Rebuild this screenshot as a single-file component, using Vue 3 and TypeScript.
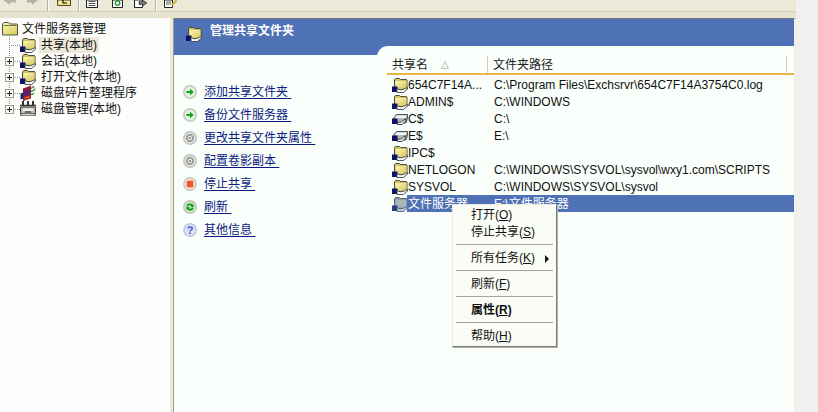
<script setup lang="ts">
interface TreeRow { label: string; icon: string; plus: boolean; selected?: boolean; last?: boolean }
interface TaskRow { label: string; icon: string }
interface ShareRow { name: string; path: string; icon: string; selected?: boolean }

const treeRows: TreeRow[] = [
  { label: '共享(本地)', icon: '#i-share', plus: false, selected: true },
  { label: '会话(本地)', icon: '#i-share', plus: true },
  { label: '打开文件(本地)', icon: '#i-share', plus: true },
  { label: '磁盘碎片整理程序', icon: '#i-defrag', plus: true },
  { label: '磁盘管理(本地)', icon: '#i-diskmgmt', plus: true, last: true },
]
const tasks: TaskRow[] = [
  { label: '添加共享文件夹', icon: '#t-go' },
  { label: '备份文件服务器', icon: '#t-go' },
  { label: '更改共享文件夹属性', icon: '#t-gear' },
  { label: '配置卷影副本', icon: '#t-gear' },
  { label: '停止共享', icon: '#t-stop' },
  { label: '刷新', icon: '#t-refresh' },
  { label: '其他信息', icon: '#t-help' },
]
const shares: ShareRow[] = [
  { name: '654C7F14A...', path: 'C:\\Program Files\\Exchsrvr\\654C7F14A3754C0.log', icon: '#i-share' },
  { name: 'ADMIN$', path: 'C:\\WINDOWS', icon: '#i-share' },
  { name: 'C$', path: 'C:\\', icon: '#i-drive' },
  { name: 'E$', path: 'E:\\', icon: '#i-drive' },
  { name: 'IPC$', path: '', icon: '#i-share' },
  { name: 'NETLOGON', path: 'C:\\WINDOWS\\SYSVOL\\sysvol\\wxy1.com\\SCRIPTS', icon: '#i-share' },
  { name: 'SYSVOL', path: 'C:\\WINDOWS\\SYSVOL\\sysvol', icon: '#i-share' },
  { name: '文件服务器', path: 'E:\\文件服务器', icon: '#i-share-sel', selected: true },
]
</script>

<template>
  <div class="page">
    <svg class="defs" width="0" height="0" aria-hidden="true">
      <defs>
        <linearGradient id="g-folder" x1="0" y1="0" x2="1" y2="1">
          <stop offset="0" stop-color="#fbf6b8" />
          <stop offset="1" stop-color="#d8c85c" />
        </linearGradient>
        <symbol id="i-folder" viewBox="0 0 16 16">
          <path d="M.5 3 2 1.500h4.500l1.500 1.500h7l.5.500v10.500H.500z" fill="url(#g-folder)" stroke="#55533a" />
          <path d="M1.500 4.500h13" stroke="#77754f" />
        </symbol>
        <symbol id="i-share" viewBox="0 0 16 16">
          <path d="M2.500 2.500 3.500 1.500h4l1 1h6l.5.500v9.500h-12.500z" fill="#cfc36a" stroke="#4f4e38" />
          <path d="M3.500 4h11v7.500h-11z" fill="url(#g-folder)" />
          <path d="M0 9.500h5.500V15H0z" fill="#0a1468" />
          <path d="M5 11.500c2 1.500 5 1.500 7 .5l3.500-1.500v1.500l-4 3.500H5z" fill="#f6f8f8" stroke="#3e4448" stroke-width=".9" />
        </symbol>
        <symbol id="i-share-sel" viewBox="0 0 16 16">
          <path d="M2.500 2.500 3.500 1.500h4l1 1h6l.5.500v9.500h-12.500z" fill="#8f9ba0" stroke="#5c6a74" />
          <path d="M3.500 4h11v7.500h-11z" fill="#a9b6b8" />
          <path d="M0 9.500h5.500V15H0z" fill="#263a82" />
          <path d="M5 11.500c2 1.500 5 1.500 7 .5l3.500-1.500v1.500l-4 3.500H5z" fill="#c2ccd6" stroke="#506078" stroke-width=".9" />
        </symbol>
        <symbol id="i-drive" viewBox="0 0 16 16">
          <path d="M2 6.500 4.500 3.500H15.500V7.500L14 12H2z" fill="#b4b8be" stroke="#3e4248" stroke-width=".9" />
          <path d="M4.500 4.500h10L13.500 7H3z" fill="#f2f4f6" />
          <path d="M0 7.500h5.500V13H0z" fill="#0a1268" />
          <path d="M5.500 10.500c2 1.500 4 .5 5-.5l3.500-2.500-1 3-3 3H5.500z" fill="#f6f8f8" stroke="#2c3036" stroke-width=".9" />
        </symbol>
        <symbol id="i-defrag" viewBox="0 0 16 16">
          <path d="M3 3.500 11 .5v13l-8 2.500z" fill="#8f1c2c" />
          <path d="M5 6l4.500-1.500v5L5 11z" fill="#3f2a8c" />
          <path d="M4.500 12l5.500-1.500v2.500l-5.500 1.500z" fill="#d24a2e" />
          <path d="M11 3.500l3-2M11 6.500l4-2M11 9.500l3-1" stroke="#3fa04a" stroke-width="1.500" />
          <path d="M12 .5l3.500 3.500" stroke="#d050b0" />
          <path d="M.5 8.500l3-1v6l-3 1z" fill="#1a2a6e" />
        </symbol>
        <symbol id="i-diskmgmt" viewBox="0 0 16 16">
          <path d="M3 0v5M8 0v5M13 0v5" stroke="#1c1c1c" stroke-width="1.800" />
          <path d="M0 4.500h16" stroke="#333" stroke-width="1.500" />
          <path d="M.5 6h15v6.500H.500z" fill="#b9bcb4" stroke="#3a3a36" />
          <path d="M3 7.500h10v2.500H3z" fill="#f0f0e8" />
          <path d="M5 10h6v3H5z" fill="#686c70" />
          <path d="M0 12.500h16V15H0z" fill="#85877f" />
          <path d="M2 13.500h12" stroke="#d8d8d0" />
        </symbol>
        <symbol id="t-go" viewBox="0 0 16 16">
          <circle cx="8" cy="8" r="7" fill="#f2f6ee" stroke="#c6ccc2" stroke-width="2" />
          <circle cx="8" cy="8" r="5.500" fill="#dcf4d4" />
          <path d="M4 6.800h4V4.300L12.300 8 8 11.700V9.200H4z" fill="#12a024" />
        </symbol>
        <symbol id="t-gear" viewBox="0 0 16 16">
          <circle cx="8" cy="8" r="7" fill="#f0f0ec" stroke="#c6c6c0" stroke-width="2" />
          <circle cx="8" cy="8" r="4.800" fill="#9c9e9c" />
          <circle cx="8" cy="8" r="2.500" fill="#e8eae4" />
          <circle cx="8" cy="8" r="1.100" fill="#7a7c78" />
        </symbol>
        <symbol id="t-stop" viewBox="0 0 16 16">
          <circle cx="8" cy="8" r="7" fill="#f8f2ec" stroke="#d0c8be" stroke-width="2" />
          <circle cx="8" cy="8" r="5.500" fill="#fbdccc" />
          <rect x="4.300" y="4.300" width="7.400" height="7.400" rx="1" fill="#e85a32" />
        </symbol>
        <symbol id="t-refresh" viewBox="0 0 16 16">
          <circle cx="8" cy="8" r="7" fill="#ecf4e6" stroke="#bcc8b6" stroke-width="2" />
          <circle cx="8" cy="8" r="5.500" fill="#b8e6ac" />
          <path d="M4 7c.5-3 5-4 7-1.500L12 4.500V8H8.500L10 6.800C8.500 5.500 6 6 5.600 7.500z" fill="#0c9420" />
          <path d="M12 9c-.5 3-5 4-7 1.500L4 11.500V8h3.500L6 9.200c1.500 1.300 4 .8 4.400-.7z" fill="#0c9420" />
        </symbol>
        <symbol id="t-help" viewBox="0 0 16 16">
          <circle cx="8" cy="8" r="7" fill="#f0f1fa" stroke="#c4c8da" stroke-width="2" />
          <circle cx="8" cy="8" r="5.800" fill="#dbe1fa" />
          <path d="M5.600 6.200C5.800 3.900 10.600 3.900 10.600 6.300 10.600 8 8 8 8 9.800" fill="none" stroke="#4058d4" stroke-width="1.700" />
          <rect x="7.100" y="10.800" width="1.800" height="1.800" fill="#4058d4" />
        </symbol>
      </defs>
    </svg>

    <div class="window">
      <header class="toolbar">
        <div class="tool-row">
          <svg width="13" height="6" viewBox="0 0 13 6"><path d="M0 0h13v2.500H7V5L3.500 2.500z" fill="#b4b2a4" /></svg>
          <svg class="nav-fwd" width="11" height="6" viewBox="0 0 11 6"><path d="M11 0H0v2.500h5V5L8 2.500z" fill="#b4b2a4" /></svg>
          <span class="tool-sep first"></span>
          <svg class="t1" width="14" height="7" viewBox="0 0 14 7"><path d="M.5 0v5.500h13V0z" fill="#f3e58c" stroke="#4c4a30" /><path d="M6 0v3h4" fill="none" stroke="#111" stroke-width="1.200" /></svg>
          <span class="tool-sep second"></span>
          <svg class="t2" width="12" height="8" viewBox="0 0 12 8"><path d="M.5 0v7.500h11V0z" fill="#fff" stroke="#222" /><path d="M2.500 1.500h7M2.500 3.500h7M2.500 5.500h7" stroke="#555" /></svg>
          <svg class="t3" width="11" height="8" viewBox="0 0 11 8"><path d="M.5 0v7.500h10V0z" fill="#fff" stroke="#222" /><circle cx="5.500" cy="3" r="2.300" fill="none" stroke="#2c9a36" stroke-width="1.400" /></svg>
          <svg class="t4" width="13" height="8" viewBox="0 0 13 8"><path d="M.5 0v7.500h8V0z" fill="#fff" stroke="#222" /><path d="M5 1.500h3.500V0L13 3 8.500 6V4.500H5z" fill="#767676" stroke="#222" stroke-width=".6" /></svg>
          <span class="tool-sep third"></span>
          <svg class="t5" width="13" height="8" viewBox="0 0 13 8"><path d="M.5 0v7.500h8V0z" fill="#fff" stroke="#222" /><path d="M2 2h5M2 4h5" stroke="#555" /><path d="M8 5 13 0" stroke="#d8b22c" stroke-width="2" /></svg>
        </div>
        <div class="tool-edge"></div>
      </header>

      <div class="main">
        <nav class="tree">
          <div class="tree-root">
            <svg width="16" height="16"><use href="#i-folder" /></svg>
            <span>文件服务器管理</span>
          </div>
          <div v-for="row in treeRows" :key="row.label" class="tree-row">
            <span class="gutter" :class="{ last: row.last }">
              <i v-if="row.plus" class="plus"></i>
            </span>
            <svg width="16" height="16"><use :href="row.icon" /></svg>
            <span class="tree-label" :class="{ selected: row.selected }">{{ row.label }}</span>
          </div>
        </nav>

        <div class="splitter"></div>

        <section class="pane">
          <div class="pane-head">
            <svg class="head-icon" width="16" height="16"><use href="#i-share" /></svg>
            <span>管理共享文件夹</span>
          </div>
          <div class="pane-body">
            <div class="tasks-col">
              <div class="band"></div>
              <ul class="tasks">
                <li v-for="task in tasks" :key="task.label" class="task">
                  <svg width="14" height="14"><use :href="task.icon" /></svg>
                  <a href="#" @click.prevent>{{ task.label }}&nbsp;</a>
                </li>
              </ul>
            </div>
            <div class="list-col">
              <div class="list">
                <div class="list-head">
                  <div class="col-name">共享名<svg class="sort" width="8" height="8" viewBox="0 0 8 8"><path d="M4 .5 7.500 7.500H.5z" fill="#f4f4ec" stroke="#c4c4bc" /></svg></div>
                  <div class="col-path">文件夹路径</div>
                </div>
                <div v-for="share in shares" :key="share.name" class="list-row" :class="{ sel: share.selected }">
                  <svg class="row-icon" width="16" height="16"><use :href="share.icon" /></svg>
                  <div class="cells">
                    <span class="cell-name">{{ share.name }}</span>
                    <span class="cell-path">{{ share.path }}</span>
                  </div>
                </div>
              </div>
            </div>
          </div>

          <div class="menu">
            <div class="mi">打开(<u>O</u>)</div>
            <div class="mi">停止共享(<u>S</u>)</div>
            <hr />
            <div class="mi">所有任务(<u>K</u>)<i class="arrow"></i></div>
            <hr />
            <div class="mi">刷新(<u>F</u>)</div>
            <hr />
            <div class="mi bold">属性(<u>R</u>)</div>
            <hr />
            <div class="mi">帮助(<u>H</u>)</div>
          </div>
        </section>
      </div>
    </div>
  </div>
</template>

<style>
html, body { margin: 0; background: #f0f0f0; overflow: hidden; }
</style>

<style scoped>
.page {
  width: 818px;
  height: 412px;
  background: #f0f0f0;
  overflow: hidden;
  font: 12px/16px "Liberation Sans", "Noto Sans CJK SC", sans-serif;
  color: #111;
}
.defs { position: absolute; }
.window {
  width: 796px;
  height: 412px;
  display: flex;
  flex-direction: column;
  background: #ece9d8;
}
.toolbar { height: 18px; flex: none; display: flex; flex-direction: column; }
.tool-row { height: 11px; display: flex; align-items: flex-start; padding-left: 3px; }
.tool-edge { flex: 1; background: #e6e3d0; border-top: 1px solid #d4d1bc; }
.nav-fwd { margin-left: 11px; }
.tool-sep { width: 2px; height: 11px; background: #fbfaf2; border-left: 1px solid #b4b2a4; box-sizing: border-box; flex: none; }
.tool-sep.first { margin-left: 9px; }
.tool-sep.second { margin-left: 7px; }
.tool-sep.third { margin-left: 8px; }
.t1 { margin-left: 8px; }
.t2 { margin-left: 6px; }
.t3 { margin-left: 14px; }
.t4 { margin-left: 11px; }
.t5 { margin-left: 7px; }
.main { flex: 1; display: flex; min-height: 0; }
.tree {
  width: 170px;
  flex: none;
  background: #fdfefb;
  padding-top: 3px;
  box-sizing: border-box;
}
.tree-root { display: flex; align-items: center; height: 16px; padding-left: 2px; gap: 4px; }
.tree-row { display: flex; align-items: center; height: 16px; }
.gutter {
  width: 20px;
  height: 16px;
  flex: none;
  display: flex;
  align-items: center;
  background:
    repeating-linear-gradient(to bottom, #8a8a8a 0 1px, transparent 1px 2px) 9px 0 / 1px 100% no-repeat,
    repeating-linear-gradient(to right, #8a8a8a 0 1px, transparent 1px 2px) 9px 8px / 11px 1px no-repeat;
}
.gutter.last {
  background:
    repeating-linear-gradient(to bottom, #8a8a8a 0 1px, transparent 1px 2px) 9px 0 / 1px 50% no-repeat,
    repeating-linear-gradient(to right, #8a8a8a 0 1px, transparent 1px 2px) 9px 8px / 11px 1px no-repeat;
}
.plus {
  width: 9px;
  height: 9px;
  margin-left: 5px;
  box-sizing: border-box;
  border: 1px solid #9a9a90;
  background:
    linear-gradient(#222, #222) center / 5px 1px no-repeat,
    linear-gradient(#222, #222) center / 1px 5px no-repeat,
    #fbfbf6;
}
.tree-label { margin-left: 3px; padding: 0 2px; line-height: 16px; white-space: nowrap; }
.tree-label.selected { background: #ece9d8; }
.splitter { width: 3px; flex: none; background: #ece9d8; border-right: 1px solid #9b9a90; }
.pane {
  flex: 1;
  min-width: 0;
  display: flex;
  flex-direction: column;
  position: relative;
  background: #fafffb;
  border-top: 1px solid #77787a;
  border-right: 2px solid #f2f1e6;
}
.pane-head {
  height: 27px;
  flex: none;
  background: #4f71b5;
  color: #fff;
  font-weight: 700;
  display: flex;
  align-items: flex-start;
  padding: 4px 0 0 12px;
  box-sizing: border-box;
  gap: 8px;
}
.head-icon { flex: none; margin-top: 3px; }
.pane-body { flex: 1; display: flex; min-height: 0; }
.tasks-col { width: 203px; flex: none; display: flex; flex-direction: column; }
.band { height: 9px; background: #4f71b5; flex: none; }
.tasks { list-style: none; margin: 0; padding: 29px 0 0 9px; display: flex; flex-direction: column; gap: 7px; }
.task { display: flex; align-items: center; height: 16px; gap: 7px; white-space: nowrap; }
.task a { color: #0a1a80; text-decoration: underline; text-underline-offset: 2px; }
.list-col { flex: 1; min-width: 0; background: #4f71b5; display: flex; }
.list {
  flex: 1;
  background: #fafffb;
  border-top-left-radius: 11px;
  padding: 10px 0 0 10px;
  min-width: 0;
}
.list-head {
  display: flex;
  height: 17px;
  margin-bottom: 1px;
  border-bottom: 2px solid #ebb548;
  color: #222;
}
.col-name { width: 101px; height: 17px; padding: 1px 0 0 5px; box-sizing: border-box; border-right: 1px solid #d0d0c4; display: flex; align-items: center; }
.sort { margin-left: 13px; }
.col-path { width: 299px; height: 17px; padding: 1px 0 0 5px; box-sizing: border-box; border-right: 1px solid #d0d0c4; line-height: 16px; }
.list-row { display: flex; align-items: center; height: 17px; padding-left: 5px; }
.row-icon { flex: none; margin-right: -1px; }
.cells { flex: 1; display: flex; height: 17px; align-items: center; padding-left: 1px; }
.cell-name { width: 86px; flex: none; overflow: hidden; white-space: nowrap; }
.cell-path { white-space: nowrap; }
.list-row.sel .cells { background: #4f71b5; color: #fff; }
.menu {
  position: absolute;
  left: 278px;
  top: 185px;
  width: 105px;
  height: 143px;
  box-sizing: border-box;
  padding: 2px 3px 0;
  background: #fafcf6;
  border: 1px solid #ecebe0;
  border-right-color: #7c7c76;
  border-bottom-color: #7c7c76;
  box-shadow: 1px 1px 0 #b0b0a8;
  display: flex;
  flex-direction: column;
}
.mi { height: 17px; line-height: 17px; padding-left: 15px; position: relative; white-space: nowrap; flex: none; }
.mi.bold { font-weight: 700; }
.menu hr { margin: 3px 0 5px; border: 0; border-top: 1px solid #a6a69e; height: 0; flex: none; }
.arrow {
  position: absolute;
  right: 4px;
  top: 5px;
  width: 0;
  height: 0;
  border-left: 4px solid #111;
  border-top: 4px solid transparent;
  border-bottom: 4px solid transparent;
}
</style>
